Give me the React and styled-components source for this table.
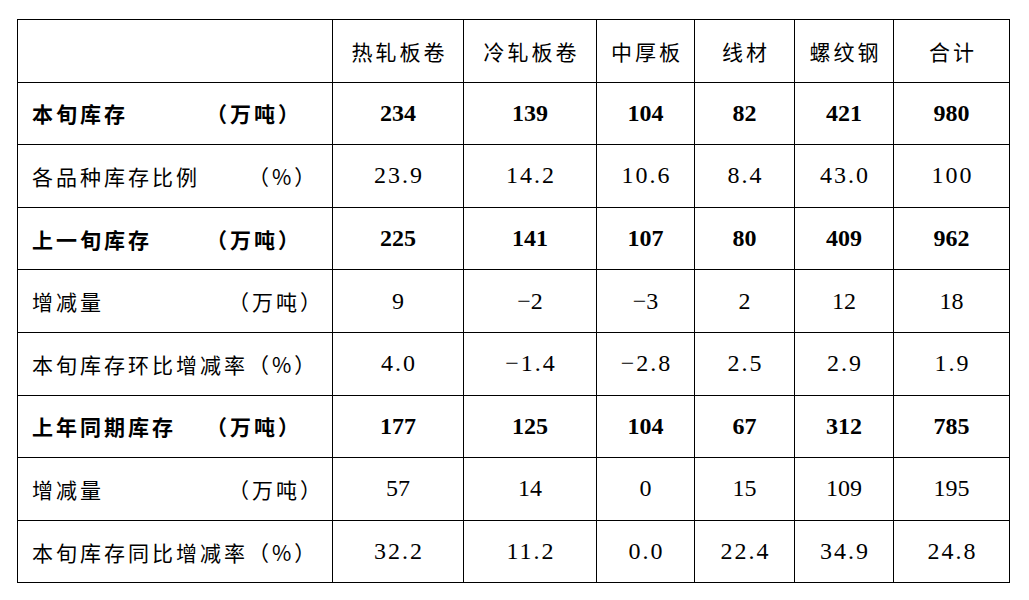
import styled, { createGlobalStyle } from 'styled-components';

const GlobalStyle = createGlobalStyle`
  html, body {
    margin: 0;
    padding: 0;
    background: #fff;
  }
`;

const columns = ['热轧板卷', '冷轧板卷', '中厚板', '线材', '螺纹钢', '合计'];
const widths = [315, 131, 133, 98, 100, 99, 116];

const rows = [
  { name: '本旬库存', unit: '（万吨）', unitAt: 174, bold: true, values: ['234', '139', '104', '82', '421', '980'] },
  { name: '各品种库存比例', unit: '（%）', unitAt: 216, spaced: true, values: ['23.9', '14.2', '10.6', '8.4', '43.0', '100'] },
  { name: '上一旬库存', unit: '（万吨）', unitAt: 174, bold: true, values: ['225', '141', '107', '80', '409', '962'] },
  { name: '增减量', unit: '（万吨）', unitAt: 196, values: ['9', '−2', '−3', '2', '12', '18'] },
  { name: '本旬库存环比增减率', unit: '（%）', spaced: true, values: ['4.0', '−1.4', '−2.8', '2.5', '2.9', '1.9'] },
  { name: '上年同期库存', unit: '（万吨）', unitAt: 174, bold: true, values: ['177', '125', '104', '67', '312', '785'] },
  { name: '增减量', unit: '（万吨）', unitAt: 196, values: ['57', '14', '0', '15', '109', '195'] },
  { name: '本旬库存同比增减率', unit: '（%）', spaced: true, values: ['32.2', '11.2', '0.0', '22.4', '34.9', '24.8'] },
];

const Page = styled.div`
  padding: 19px 0 0 17px;
`;

const Table = styled.table`
  border-collapse: collapse;
  table-layout: fixed;
  width: 992px;
  color: #000;
`;

const Row = styled.tr`
  height: 62.6px;
`;

const HeadCell = styled.th`
  border: 1px solid #000;
  padding: 0;
  text-align: center;
  font-family: "Noto Sans CJK SC", sans-serif;
  font-size: 21px;
  font-weight: 400;
  letter-spacing: 3px;
  text-indent: 3px;
`;

const LabelCell = styled.td`
  border: 1px solid #000;
  padding: 0 0 0 14px;
  white-space: nowrap;
  font-family: "Noto Sans CJK SC", sans-serif;
  font-size: 21px;
  font-weight: ${p => (p.$bold ? 700 : 400)};
  letter-spacing: ${p => (p.$bold ? '3px' : '3px')};
`;

const Name = styled.span`
  display: inline-block;
  min-width: ${p => (p.$w ? `${p.$w}px` : 'auto')};
`;

const ValueCell = styled.td`
  border: 1px solid #000;
  padding: 0;
  text-align: center;
  font-family: "Liberation Serif", "Times New Roman", serif;
  font-size: 24px;
  font-weight: ${p => (p.$bold ? 700 : 400)};
  letter-spacing: ${p => (p.$spaced ? '2px' : '0')};
  text-indent: ${p => (p.$spaced ? '2px' : '0')};
`;

export default function App() {
  return (
    <>
      <GlobalStyle />
      <Page>
        <Table>
          <colgroup>
            {widths.map((w, i) => (
              <col key={i} style={{ width: w }} />
            ))}
          </colgroup>
          <thead>
            <Row>
              <HeadCell />
              {columns.map(c => (
                <HeadCell key={c}>{c}</HeadCell>
              ))}
            </Row>
          </thead>
          <tbody>
            {rows.map((r, i) => (
              <Row key={i}>
                <LabelCell $bold={r.bold}>
                  <Name $w={r.unitAt}>{r.name}</Name>
                  {r.unit}
                </LabelCell>
                {r.values.map((v, j) => (
                  <ValueCell key={j} $bold={r.bold} $spaced={r.spaced}>
                    {v}
                  </ValueCell>
                ))}
              </Row>
            ))}
          </tbody>
        </Table>
      </Page>
    </>
  );
}
